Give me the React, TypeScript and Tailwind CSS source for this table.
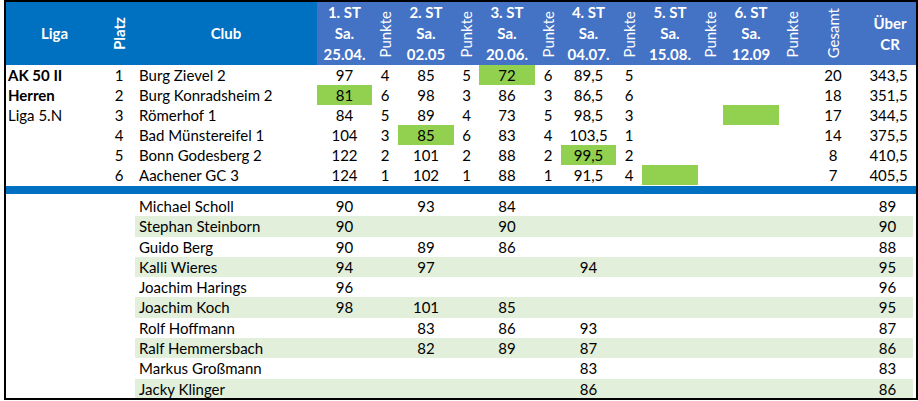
import React from "react";

const grid =
  "grid grid-cols-[97px_32px_182px_55px_26px_56px_25px_56px_26px_55px_26px_56px_25px_56px_26px_56px_55px]";
const playerGrid =
  "grid grid-cols-[182px_55px_26px_56px_25px_56px_26px_55px_26px_56px_25px_56px_26px_56px_52px]";

const stages = [
  ["1. ST", "Sa.", "25.04."],
  ["2. ST", "Sa.", "02.05"],
  ["3. ST", "Sa.", "20.06."],
  ["4. ST", "Sa.", "04.07."],
  ["5. ST", "Sa.", "15.08."],
  ["6. ST", "Sa.", "12.09"],
];

type Team = {
  platz: number;
  club: string;
  // [score, punkte] per Spieltag, "" = leer
  st: [string, string][];
  green: number; // index of highlighted Spieltag
  gesamt: string;
  cr: string;
};

const teams: Team[] = [
  {
    platz: 1,
    club: "Burg Zievel 2",
    st: [["97", "4"], ["85", "5"], ["72", "6"], ["89,5", "5"], ["", ""], ["", ""]],
    green: 2,
    gesamt: "20",
    cr: "343,5",
  },
  {
    platz: 2,
    club: "Burg Konradsheim 2",
    st: [["81", "6"], ["98", "3"], ["86", "3"], ["86,5", "6"], ["", ""], ["", ""]],
    green: 0,
    gesamt: "18",
    cr: "351,5",
  },
  {
    platz: 3,
    club: "Römerhof 1",
    st: [["84", "5"], ["89", "4"], ["73", "5"], ["98,5", "3"], ["", ""], ["", ""]],
    green: 5,
    gesamt: "17",
    cr: "344,5",
  },
  {
    platz: 4,
    club: "Bad Münstereifel 1",
    st: [["104", "3"], ["85", "6"], ["83", "4"], ["103,5", "1"], ["", ""], ["", ""]],
    green: 1,
    gesamt: "14",
    cr: "375,5",
  },
  {
    platz: 5,
    club: "Bonn Godesberg 2",
    st: [["122", "2"], ["101", "2"], ["88", "2"], ["99,5", "2"], ["", ""], ["", ""]],
    green: 3,
    gesamt: "8",
    cr: "410,5",
  },
  {
    platz: 6,
    club: "Aachener GC 3",
    st: [["124", "1"], ["102", "1"], ["88", "1"], ["91,5", "4"], ["", ""], ["", ""]],
    green: 4,
    gesamt: "7",
    cr: "405,5",
  },
];

const liga: [string, boolean][] = [
  ["AK 50 II", true],
  ["Herren", true],
  ["Liga 5.N", false],
  ["", false],
  ["", false],
  ["", false],
];

const players: { name: string; st: string[]; cr: string }[] = [
  { name: "Michael Scholl", st: ["90", "93", "84", "", "", ""], cr: "89" },
  { name: "Stephan Steinborn", st: ["90", "", "90", "", "", ""], cr: "90" },
  { name: "Guido Berg", st: ["90", "89", "86", "", "", ""], cr: "88" },
  { name: "Kalli Wieres", st: ["94", "97", "", "94", "", ""], cr: "95" },
  { name: "Joachim Harings", st: ["96", "", "", "", "", ""], cr: "96" },
  { name: "Joachim Koch", st: ["98", "101", "85", "", "", ""], cr: "95" },
  { name: "Rolf Hoffmann", st: ["", "83", "86", "93", "", ""], cr: "87" },
  { name: "Ralf Hemmersbach", st: ["", "82", "89", "87", "", ""], cr: "86" },
  { name: "Markus Großmann", st: ["", "", "", "83", "", ""], cr: "83" },
  { name: "Jacky Klinger", st: ["", "", "", "86", "", ""], cr: "86" },
];

const Vertical = ({ text, bold }: { text: string; bold?: boolean }) => (
  <span className={`[writing-mode:vertical-rl] rotate-180 leading-none ${bold ? "font-bold" : ""}`}>
    {text}
  </span>
);

const App = () => {
  return (
    <div className="w-[918px] h-[401px] bg-white font-['Lato',sans-serif] text-[15px] text-black">
      <div className="ml-[4px] w-[914px] h-[398px] border-2 border-b-0 border-black overflow-hidden">
        {/* Kopfzeile */}
        <div className={`${grid} h-[63px] text-white`}>
          <div className="bg-[#0070C0] flex items-center justify-center font-bold">Liga</div>
          <div className="bg-[#0070C0] flex items-center justify-center">
            <Vertical text="Platz" bold />
          </div>
          <div className="bg-[#0070C0] flex items-center justify-center font-bold">Club</div>
          {stages.map((s, i) => (
            <React.Fragment key={i}>
              <div className="bg-[#4472C4] flex flex-col items-center justify-center font-bold leading-[21px]">
                {s.map((line) => (
                  <span key={line}>{line}</span>
                ))}
              </div>
              <div className="bg-[#4472C4] flex items-end justify-center pb-[7px]">
                <Vertical text="Punkte" />
              </div>
            </React.Fragment>
          ))}
          <div className="bg-[#4472C4] flex items-end justify-center pb-[7px]">
            <Vertical text="Gesamt" />
          </div>
          <div className="bg-[#4472C4] flex flex-col items-center justify-center font-bold leading-[21px] pl-[3px]">
            <span>Über</span>
            <span>CR</span>
          </div>
        </div>

        {/* Tabelle */}
        {teams.map((t, r) => (
          <div key={t.platz} className={`${grid} h-[20px] leading-[20px]`}>
            <div className={`pl-[2px] ${liga[r][1] ? "font-bold" : ""}`}>{liga[r][0]}</div>
            <div className="text-center">{t.platz}</div>
            <div className="pl-[4px]">{t.club}</div>
            {t.st.map(([score, pkt], i) => (
              <React.Fragment key={i}>
                <div className={`text-center ${t.green === i ? "bg-[#92D050]" : ""}`}>{score}</div>
                <div className="text-center">{pkt}</div>
              </React.Fragment>
            ))}
            <div className="text-center">{t.gesamt}</div>
            <div className="text-center">{t.cr}</div>
          </div>
        ))}

        <div className="h-[8px] bg-[#0070C0] mt-[1px]" />
        <div className="h-[2px]" />

        {/* Spieler */}
        {players.map((p, r) => (
          <div key={p.name} className={`${grid} h-[20.3px] leading-[20.3px]`}>
            <div />
            <div />
            <div className={`col-span-15 mr-[3px] ${playerGrid} ${r % 2 === 1 ? "bg-[#E2EFDA]" : ""}`}>
              <div className="pl-[4px]">{p.name}</div>
              {p.st.map((v, i) => (
                <React.Fragment key={i}>
                  <div className="text-center">{v}</div>
                  <div />
                </React.Fragment>
              ))}
              <div />
              <div className="text-center pl-[1px]">{p.cr}</div>
            </div>
          </div>
        ))}
      </div>
      <div className="h-[2px] ml-[4px] w-[914px] bg-black" />
    </div>
  );
};

export default App;
